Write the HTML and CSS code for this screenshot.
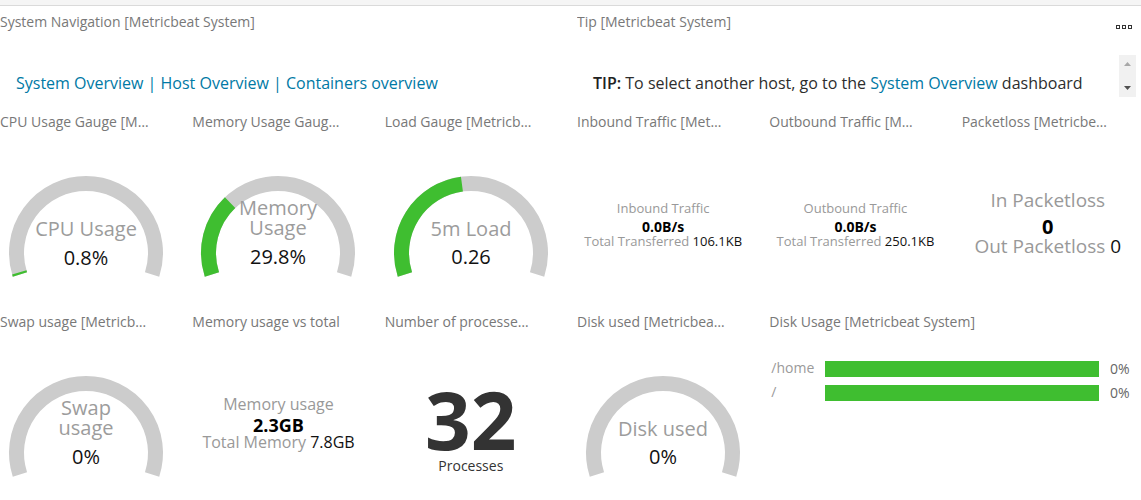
FILE: index.html
```html
<!DOCTYPE html>
<html lang="en">
<head>
<meta charset="utf-8">
<title>Metricbeat System Host Overview</title>
<link rel="stylesheet" href="styles.css">
</head>
<body>
<div class="topbar"></div>
<main class="dash">
  <section class="panel span3">
    <header class="phead"><h2 class="ptitle wide">System Navigation [Metricbeat System]</h2></header>
    <div class="navbody">
      <a class="link" href="#">System Overview</a> | <a class="link" href="#">Host Overview</a> | <a class="link" href="#">Containers overview</a>
    </div>
  </section>

  <section class="panel span3 tippanel">
    <header class="phead"><h2 class="ptitle wide">Tip [Metricbeat System]</h2><span class="menu"><i></i><i></i><i></i></span></header>
    <div class="tipbody">
      <p class="tiptext"><strong>TIP:</strong> To select another host, go to the <a class="link" href="#">System Overview</a> dashboard</p>
      <div class="scrollbar">
        <svg width="17" height="42" viewBox="0 0 17 42"><path d="M5 11 L8.5 7 L12 11 Z" fill="#a8a8a8"/><path d="M5 31 L8.5 35 L12 31 Z" fill="#505050"/></svg>
      </div>
    </div>
  </section>

  <section class="panel">
    <header class="phead"><h2 class="ptitle">CPU Usage Gauge [Metricbeat System]</h2></header>
    <svg class="gauge" width="172" height="104" viewBox="0 0 172 104">
      <path class="track" d="M19.90 98.48 A69.5 69.5 0 1 1 152.10 98.48"/>
      <path class="fill" d="M19.90 98.48 A69.5 69.5 0 0 1 19.28 96.47"/>
      <text class="glabel" x="86" y="60">CPU Usage</text>
      <text class="gvalue" x="86" y="89">0.8%</text>
    </svg>
  </section>

  <section class="panel">
    <header class="phead"><h2 class="ptitle">Memory Usage Gauge [Metricbeat System]</h2></header>
    <svg class="gauge" width="172" height="104" viewBox="0 0 172 104">
      <path class="track" d="M19.90 98.48 A69.5 69.5 0 1 1 152.10 98.48"/>
      <path class="fill" d="M19.90 98.48 A69.5 69.5 0 0 1 38.07 26.67"/>
      <text class="glabel" x="86" y="39">Memory</text>
      <text class="glabel" x="86" y="59">Usage</text>
      <text class="gvalue" x="86" y="88">29.8%</text>
    </svg>
  </section>

  <section class="panel">
    <header class="phead"><h2 class="ptitle">Load Gauge [Metricbeat System]</h2></header>
    <svg class="gauge" width="172" height="104" viewBox="0 0 172 104">
      <path class="track" d="M19.90 98.48 A69.5 69.5 0 1 1 152.10 98.48"/>
      <path class="fill" d="M19.90 98.48 A69.5 69.5 0 0 1 76.93 8.10"/>
      <text class="glabel" x="86" y="60">5m Load</text>
      <text class="gvalue" x="86" y="88">0.26</text>
    </svg>
  </section>

  <section class="panel">
    <header class="phead"><h2 class="ptitle">Inbound Traffic [Metricbeat System]</h2></header>
    <div class="metric traffic">
      <div class="mlabel">Inbound Traffic</div>
      <div class="mvalue">0.0B/s</div>
      <div class="msub">Total Transferred <span class="dark">106.1KB</span></div>
    </div>
  </section>

  <section class="panel">
    <header class="phead"><h2 class="ptitle">Outbound Traffic [Metricbeat System]</h2></header>
    <div class="metric traffic">
      <div class="mlabel">Outbound Traffic</div>
      <div class="mvalue">0.0B/s</div>
      <div class="msub">Total Transferred <span class="dark">250.1KB</span></div>
    </div>
  </section>

  <section class="panel">
    <header class="phead"><h2 class="ptitle">Packetloss [Metricbeat System]</h2></header>
    <div class="metric packet">
      <div class="plabel">In Packetloss</div>
      <div class="pvalue">0</div>
      <div class="psub">Out Packetloss <span class="dark">0</span></div>
    </div>
  </section>

  <section class="panel">
    <header class="phead"><h2 class="ptitle">Swap usage [Metricbeat System]</h2></header>
    <svg class="gauge" width="172" height="104" viewBox="0 0 172 104">
      <path class="track" d="M19.90 98.48 A69.5 69.5 0 1 1 152.10 98.48"/>
      <text class="glabel" x="86" y="39">Swap</text>
      <text class="glabel" x="86" y="59">usage</text>
      <text class="gvalue" x="86" y="88">0%</text>
    </svg>
  </section>

  <section class="panel">
    <header class="phead"><h2 class="ptitle">Memory usage vs total</h2></header>
    <div class="metric memtotal">
      <div class="tlabel">Memory usage</div>
      <div class="tvalue">2.3GB</div>
      <div class="tsub">Total Memory <span class="dark">7.8GB</span></div>
    </div>
  </section>

  <section class="panel">
    <header class="phead"><h2 class="ptitle">Number of processes [Metricbeat System]</h2></header>
    <div class="metric procs">
      <div class="bignum">32</div>
      <div class="biglabel">Processes</div>
    </div>
  </section>

  <section class="panel">
    <header class="phead"><h2 class="ptitle">Disk used [Metricbeat System]</h2></header>
    <svg class="gauge" width="172" height="104" viewBox="0 0 172 104">
      <path class="track" d="M19.90 98.48 A69.5 69.5 0 1 1 152.10 98.48"/>
      <text class="glabel" x="86" y="60">Disk used</text>
      <text class="gvalue" x="86" y="88">0%</text>
    </svg>
  </section>

  <section class="panel span2">
    <header class="phead"><h2 class="ptitle wide">Disk Usage [Metricbeat System]</h2></header>
    <div class="disks">
      <div class="drow"><span class="dlabel">/home</span><span class="dbar"></span><span class="dval">0%</span></div>
      <div class="drow"><span class="dlabel">/</span><span class="dbar"></span><span class="dval">0%</span></div>
    </div>
  </section>
</main>
</body>
</html>
```

FILE: styles.css
```css
html, body {
  margin: 0;
  padding: 0;
  overflow: hidden;
  background: #fff;
  font-family: "Open Sans", "Noto Sans", sans-serif;
}

.topbar {
  height: 5px;
  background: #f5f5f5;
  border-bottom: 1px solid #dadada;
}

.dash {
  display: grid;
  grid-template-columns: repeat(6, 192.33px);
  grid-template-rows: 100px 200px 194px;
}

.panel {
  padding: 6px 20px 0 0;
  min-width: 0;
}

.span3 { grid-column: span 3; }
.span2 { grid-column: span 2; }

.tippanel { padding-right: 18px; }

.phead {
  display: flex;
  justify-content: space-between;
  align-items: flex-start;
  height: 20px;
}

.ptitle {
  margin: 0;
  font-size: 14px;
  line-height: 20px;
  font-weight: 400;
  color: #787878;
  width: 149px;
  white-space: nowrap;
  overflow: hidden;
  text-overflow: ellipsis;
}

.ptitle.wide { width: auto; }

.menu {
  display: flex;
  gap: 2px;
  margin-top: 13px;
  margin-right: 4px;
}

.menu i {
  display: block;
  width: 4px;
  height: 4px;
  box-sizing: border-box;
  border: 1px solid #333;
}

.link {
  color: #0079a5;
  text-decoration: none;
}

.navbody {
  margin-top: 23px;
  padding: 17px 0 0 16px;
  font-size: 16px;
  line-height: 22px;
  color: #0079a5;
}

.tipbody {
  margin-top: 23px;
  height: 42px;
  display: flex;
  justify-content: space-between;
}

.tiptext {
  margin: 0;
  padding: 17px 0 0 16px;
  font-size: 16px;
  line-height: 22px;
  color: #2d2d2d;
}

.tiptext strong { font-weight: 600; color: #222; }

.scrollbar {
  width: 17px;
  height: 42px;
  background: #f1f1f1;
}

.scrollbar svg { display: block; }

/* gauges */
.gauge {
  display: block;
  margin-top: 44px;
  overflow: visible;
}

.track, .fill {
  fill: none;
  stroke-width: 15;
}

.track { stroke: #cccccc; }
.fill { stroke: #3fbe30; }

.glabel {
  font-family: "Open Sans", sans-serif;
  font-size: 20px;
  fill: #9c9c9c;
  text-anchor: middle;
}

.gvalue {
  font-family: "Open Sans", sans-serif;
  font-size: 20px;
  fill: #111;
  text-anchor: middle;
}

/* metrics */
.metric {
  display: flex;
  flex-direction: column;
  align-items: center;
  text-align: center;
  white-space: nowrap;
}

.dark { color: #111; }

.traffic { margin-top: 66px; }

.mlabel {
  font-size: 13px;
  line-height: 21px;
  color: #999;
}

.mvalue {
  font-size: 14px;
  line-height: 15px;
  font-weight: 700;
  color: #000;
}

.msub {
  font-size: 13px;
  line-height: 14px;
  color: #999;
}

.packet { margin-top: 52px; }

.plabel {
  font-size: 19px;
  line-height: 33px;
  color: #999;
}

.pvalue {
  font-size: 20px;
  line-height: 20px;
  font-weight: 700;
  color: #000;
}

.psub {
  font-size: 19px;
  line-height: 19px;
  color: #999;
}

.memtotal { margin-top: 60px; }

.tlabel {
  font-size: 16px;
  line-height: 25px;
  color: #999;
}

.tvalue {
  font-size: 18px;
  line-height: 17px;
  font-weight: 700;
  color: #000;
}

.tsub {
  font-size: 16px;
  line-height: 16px;
  color: #999;
}

.procs { margin-top: 52px; }

.bignum {
  font-size: 80px;
  line-height: 70px;
  font-weight: 700;
  color: #333;
}

.biglabel {
  font-size: 14px;
  line-height: 23px;
  color: #333;
}

/* disk usage bars */
.disks {
  margin-top: 29px;
  display: flex;
  flex-direction: column;
  gap: 8px;
}

.drow {
  display: flex;
  align-items: center;
  height: 16px;
}

.dlabel {
  width: 54px;
  padding-left: 2px;
  font-size: 14px;
  line-height: 16px;
  margin-top: -3px;
  color: #9a9a9a;
}

.dbar {
  flex: 1;
  height: 16px;
  background: #3fbe30;
}

.dval {
  width: 24px;
  margin-left: 11px;
  font-size: 14px;
  line-height: 16px;
  margin-top: -1px;
  color: #666;
}
```
